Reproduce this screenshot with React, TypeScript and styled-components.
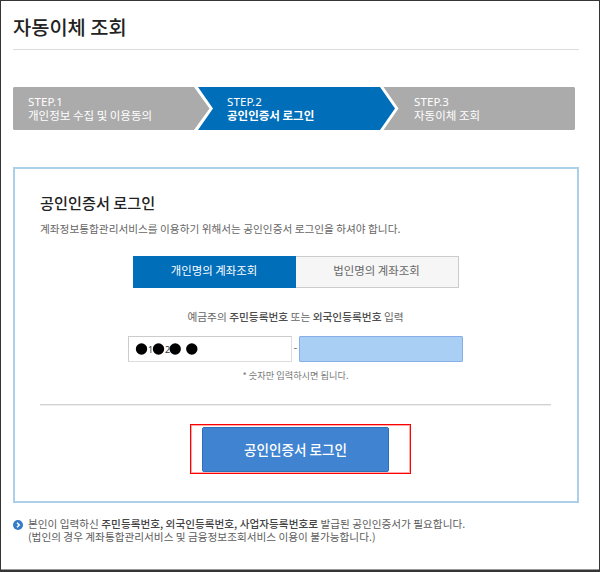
import React from 'react';
import styled, { createGlobalStyle } from 'styled-components';

const Global = createGlobalStyle`
  * { box-sizing: border-box; }
  body { margin: 0; background: #fff; font-family: "Noto Sans CJK KR", sans-serif; }
  h1, h2, p { margin: 0; }
`;

const Page = styled.main`
  width: 600px;
  height: 572px;
  padding: 12px 20px 0 12px;
  border: solid #353535;
  border-width: 1px 1px 2px 1px;
  box-shadow: inset 0 -1px #999;
  overflow: hidden;
  color: #666;
  white-space: nowrap;
`;

const Title = styled.h1`
  height: 37px;
  line-height: 28px;
  border-bottom: 1px solid #dcdcdc;
  color: #222;
  font-size: 19.8px;
  font-weight: 500;
`;

const Steps = styled.ol`
  position: relative;
  display: grid;
  grid-template-columns: 199px 187px 176px;
  width: 562px;
  height: 43px;
  margin: 37px 0 0;
  padding: 0;
  list-style: none;
`;

const StepShapes = styled.svg`
  position: absolute;
  inset: 0;
`;

const Step = styled.li<{ $bold?: boolean }>`
  position: relative;
  padding: 8px 0 0 15px;
  color: #fff;
  font-size: 11.5px;
  line-height: 14px;
  font-weight: ${(p) => (p.$bold ? 700 : 400)};
`;

const StepNo = styled.div`
  height: 13px;
  line-height: 13px;
  font-family: "Noto Sans", sans-serif;
  font-size: 11.5px;
  letter-spacing: 0.1px;
  font-weight: 400;
`;

const Panel = styled.section`
  display: flex;
  flex-direction: column;
  align-items: center;
  width: 566px;
  height: 336px;
  margin-top: 37px;
  padding: 23px 26px 0 25px;
  border: 2px solid #acd0e9;
`;

const PanelTitle = styled.h2`
  align-self: flex-start;
  height: 20px;
  line-height: 20px;
  color: #222;
  font-size: 15.2px;
  font-weight: 500;
`;

const Description = styled.p`
  align-self: flex-start;
  margin-top: 9px;
  line-height: 16px;
  font-size: 10.67px;
`;

const Tabs = styled.div`
  display: flex;
  width: 326px;
  height: 32px;
  margin-top: 19px;
`;

const Tab = styled.button<{ $active?: boolean }>`
  width: 163px;
  padding: 0 0 4px;
  border: 1px solid ${(p) => (p.$active ? '#006eb9' : '#ccc')};
  border-left-width: ${(p) => (p.$active ? 1 : 0)}px;
  background: ${(p) => (p.$active ? '#006eb9' : '#f6f6f6')};
  color: ${(p) => (p.$active ? '#fff' : '#666')};
  font: 400 11.4px/16px "Noto Sans CJK KR", sans-serif;
`;

const FieldLabel = styled.p`
  margin-top: 20px;
  line-height: 18px;
  font-size: 10.7px;
  b { font-weight: 500; color: #4d4d4d; }
`;

const Fields = styled.div`
  display: flex;
  width: 335px;
  height: 27px;
  margin-top: 10px;
`;

const Field = styled.div<{ $filled?: boolean }>`
  width: 164px;
  height: 26px;
  border: 1px solid ${(p) => (p.$filled ? '#88aee9' : '#ccc')};
  border-right-color: ${(p) => (p.$filled ? '#88aee9' : '#ddd')};
  border-bottom-color: ${(p) => (p.$filled ? '#88aee9' : '#ddd')};
  background: ${(p) => (p.$filled ? '#a9cff5' : '#fff')};
  border-radius: ${(p) => (p.$filled ? 1 : 0)}px;
`;

const Dash = styled.span`
  width: 7px;
  line-height: 22px;
  text-align: center;
  font-size: 11px;
`;

const Hint = styled.p`
  margin-top: 4px;
  line-height: 16px;
  font-size: 9.2px;
  color: #777;
`;

const Divider = styled.hr`
  width: 511px;
  height: 2px;
  margin: 21px 0 0;
  border: 0;
  border-top: 1px solid #d2d2d2;
  background: #eee;
`;

const Highlight = styled.div`
  width: 221px;
  height: 50px;
  margin: 18px 0 0 10px;
  padding: 2px 0 0 11px;
  border: 1px solid #f00;
  box-shadow: inset 0 0 0 1px #ffa9a9;
`;

const LoginButton = styled.button`
  display: block;
  width: 187px;
  height: 45px;
  padding: 0 0 2px;
  border: 1px solid #2c70b8;
  border-radius: 2px;
  background: #3f83d1;
  color: #fff;
  font: 500 13.6px/20px "Noto Sans CJK KR", sans-serif;
`;

const Notice = styled.footer`
  display: flex;
  gap: 5px;
  margin-top: 14px;
  font-size: 10.65px;
  line-height: 13px;
  color: #5c5c5c;
  b { font-weight: 500; color: #444; }
  svg { flex: none; margin-top: 3px; }
`;

export default function App() {
  return (
    <>
      <Global />
      <Page>
        <Title>자동이체 조회</Title>
        <Steps>
          <StepShapes width="562" height="43" viewBox="0 0 562 43">
            <path d="M1 0H181L196.500 21.500L181 43H1L0 42V1Z" fill="#ababab" />
            <path d="M185 0H367L382 21.500L367 43H185L200 21.500Z" fill="#006eb9" />
            <path d="M370.500 0H561L562 1V42L561 43H370.500L385.500 21.500Z" fill="#ababab" />
          </StepShapes>
          <Step><StepNo>STEP.1</StepNo>개인정보 수집 및 이용동의</Step>
          <Step $bold><StepNo>STEP.2</StepNo>공인인증서 로그인</Step>
          <Step><StepNo>STEP.3</StepNo>자동이체 조회</Step>
        </Steps>
        <Panel>
          <PanelTitle>공인인증서 로그인</PanelTitle>
          <Description>계좌정보통합관리서비스를 이용하기 위해서는 공인인증서 로그인을 하셔야 합니다.</Description>
          <Tabs>
            <Tab $active>개인명의 계좌조회</Tab>
            <Tab>법인명의 계좌조회</Tab>
          </Tabs>
          <FieldLabel>예금주의 <b>주민등록번호</b> 또는 <b>외국인등록번호</b> 입력</FieldLabel>
          <Fields>
            <Field>
              <svg width="90" height="24" viewBox="0 0 90 24">
                <g fill="#333" fontFamily="Noto Sans" fontSize="9">
                  <text x="19" y="15.500">1</text>
                  <text x="36" y="15.500">2</text>
                </g>
                <circle cx="12.500" cy="12" r="5.700" />
                <circle cx="29.500" cy="12" r="5.700" />
                <circle cx="46.200" cy="12" r="5.700" />
                <circle cx="62.800" cy="12" r="5.700" />
              </svg>
            </Field>
            <Dash>-</Dash>
            <Field $filled />
          </Fields>
          <Hint>* 숫자만 입력하시면 됩니다.</Hint>
          <Divider />
          <Highlight>
            <LoginButton>공인인증서 로그인</LoginButton>
          </Highlight>
        </Panel>
        <Notice>
          <svg width="10" height="10" viewBox="0 0 10 10">
            <circle cx="5" cy="5" r="5" fill="#357bc9" />
            <path d="M4 2.700L6.300 5L4 7.300" fill="none" stroke="#fff" strokeWidth="1.400" />
          </svg>
          <div>
            <p>본인이 입력하신 <b>주민등록번호, 외국인등록번호, 사업자등록번호로</b> 발급된 공인인증서가 필요합니다.</p>
            <p>(법인의 경우 계좌통합관리서비스 및 금융정보조회서비스 이용이 불가능합니다.)</p>
          </div>
        </Notice>
      </Page>
    </>
  );
}
